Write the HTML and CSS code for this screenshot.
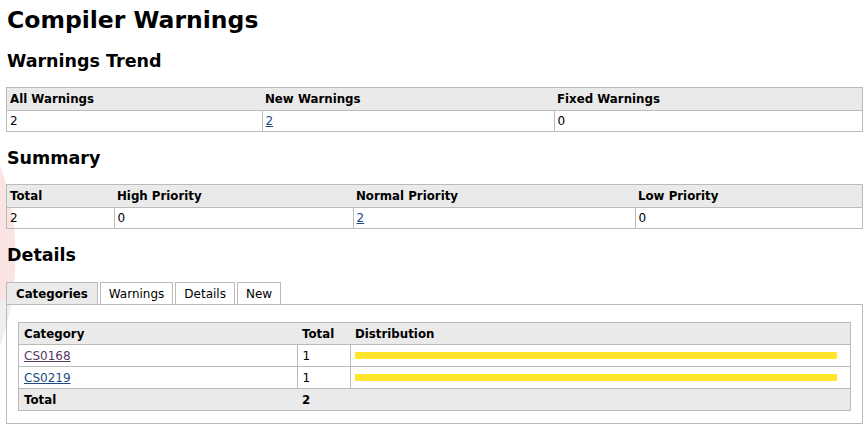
FILE: index.html
```html
<!DOCTYPE html>
<html>
<head>
<meta charset="utf-8">
<title>Compiler Warnings</title>
<link rel="stylesheet" href="styles.css">
</head>
<body>
<svg class="watermark" width="24" height="190" viewBox="0 0 24 190" aria-hidden="true">
  <defs>
    <clipPath id="wm-top"><rect x="0" y="0" width="24" height="138"/></clipPath>
    <clipPath id="wm-bottom"><rect x="0" y="138" width="24" height="52"/></clipPath>
  </defs>
  <path d="M0 2 A 277 277 0 0 1 0 184 Z" fill="#f9e3e3" clip-path="url(#wm-top)"/>
  <path d="M0 2 A 277 277 0 0 1 0 184 Z" fill="#efefef" clip-path="url(#wm-bottom)"/>
</svg>
<main class="page">
  <h1 class="title">Compiler Warnings</h1>

  <h2 class="section">Warnings Trend</h2>
  <table class="grid grid-trend">
    <thead>
      <tr><th class="c-all">All Warnings</th><th class="c-new">New Warnings</th><th>Fixed Warnings</th></tr>
    </thead>
    <tbody>
      <tr><td>2</td><td><a class="link" href="#">2</a></td><td>0</td></tr>
    </tbody>
  </table>

  <h2 class="section">Summary</h2>
  <table class="grid grid-summary">
    <thead>
      <tr><th class="c-total">Total</th><th class="c-high">High Priority</th><th class="c-normal">Normal Priority</th><th>Low Priority</th></tr>
    </thead>
    <tbody>
      <tr><td>2</td><td>0</td><td><a class="link" href="#">2</a></td><td>0</td></tr>
    </tbody>
  </table>

  <h2 class="section section-details">Details</h2>
  <div class="tabs">
    <span class="tab tab-active">Categories</span>
    <span class="tab">Warnings</span>
    <span class="tab">Details</span>
    <span class="tab">New</span>
  </div>
  <div class="panel">
    <table class="grid grid-cat">
      <thead>
        <tr><th class="c-cat">Category</th><th class="c-ctotal">Total</th><th>Distribution</th></tr>
      </thead>
      <tbody>
        <tr><td><a class="link visited" href="#">CS0168</a></td><td>1</td><td class="dist"><div class="bar" style="width:100%"></div></td></tr>
        <tr><td><a class="link" href="#">CS0219</a></td><td>1</td><td class="dist"><div class="bar" style="width:100%"></div></td></tr>
      </tbody>
      <tfoot>
        <tr><th>Total</th><th>2</th><th></th></tr>
      </tfoot>
    </table>
  </div>
</main>
</body>
</html>
```

FILE: styles.css
```css
html, body {
  margin: 0;
  padding: 0;
  background: #fff;
}

body {
  font-family: Verdana, "DejaVu Sans", sans-serif;
  font-size: 12px;
  color: #000;
  position: relative;
}

.watermark {
  position: absolute;
  left: 0;
  top: 163px;
  z-index: 0;
}

.page {
  position: relative;
  z-index: 1;
  padding: 5px 1px 0 6px;
}

.title {
  font-size: 23.5px;
  font-weight: bold;
  margin: 0 0 0 1px;
  line-height: 30px;
}

.section {
  font-size: 17.5px;
  font-weight: bold;
  margin: 15px 0 0 1px;
  line-height: 22px;
}

.grid {
  width: 100%;
  border-collapse: collapse;
  border: 1px solid #bbb;
  margin-top: 15px;
  background: transparent;
}

.grid th {
  background: #eaeaea;
  text-align: left;
  font-weight: bold;
  font-size: 11.8px;
  padding: 0 3px;
  height: 22px;
  border-bottom: 1px solid #bbb;
}

.grid td {
  padding: 0 3px;
  height: 20px;
  border: 1px solid #bbb;
}

.grid tfoot th {
  border-bottom: none;
  border-top: 1px solid #bbb;
}

.c-all { width: 249px; }
.c-new { width: 286px; }

.c-total { width: 101px; }
.c-high { width: 233px; }
.c-normal { width: 276px; }

.link {
  color: #204a87;
  text-decoration: underline;
}

.link.visited {
  color: #5c3566;
}

.tabs {
  display: flex;
  gap: 2px;
  margin: 16px 0 0 0;
  height: 22px;
  align-items: stretch;
}

.tab {
  display: flex;
  align-items: center;
  padding: 0 8px;
  border: 1px solid #bbb;
  border-bottom: none;
  background: #fff;
}

.tab-active {
  background: #eaeaea;
  font-weight: bold;
  font-size: 11.8px;
  padding: 0 9px 0 9px;
}

.panel {
  border: 1px solid #bbb;
  padding: 17px 11px 12px 11px;
}

.grid-cat {
  margin-top: 0;
}

.grid-cat th {
  height: 21px;
  padding: 0 5px;
}

.grid-cat td {
  height: 21px;
  padding: 0 5px;
}

.c-cat { width: 268px; }
.c-ctotal { width: 43px; }

.grid-cat td.dist {
  padding: 0 13px 0 4px;
}

.bar {
  height: 7px;
  background: #ffe62b;
}
```
